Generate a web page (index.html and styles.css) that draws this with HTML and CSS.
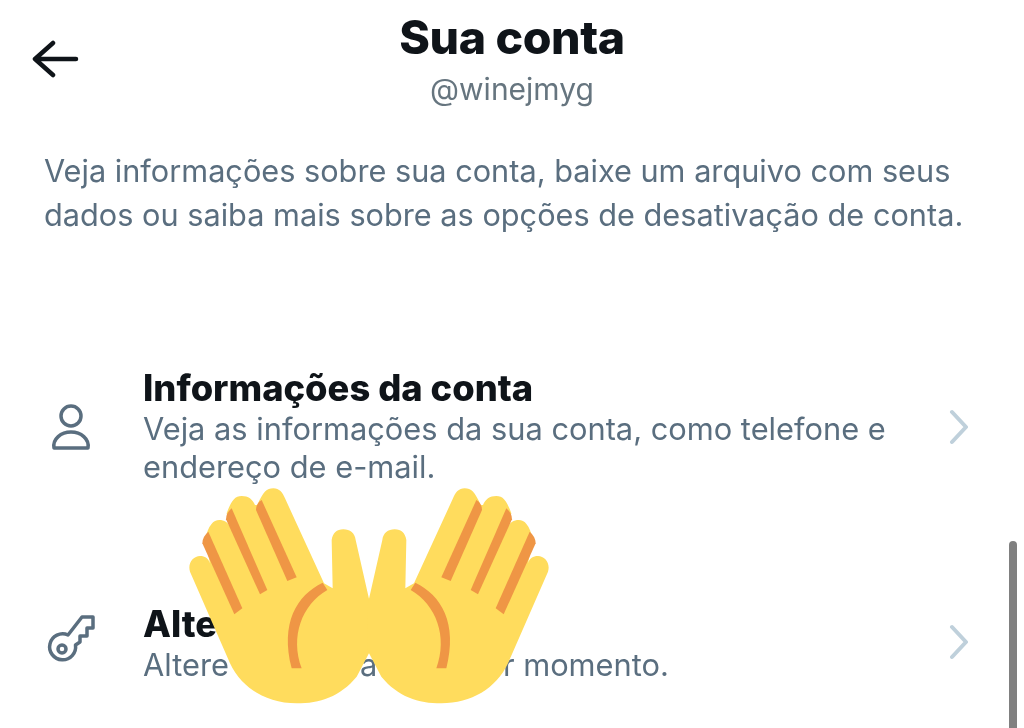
FILE: index.html
```html
<!DOCTYPE html>
<html lang="pt-BR">
<head>
<meta charset="utf-8">
<title>Sua conta</title>
<link rel="stylesheet" href="styles.css">
</head>
<body>
<main class="page">
  <header class="header">
    <svg class="back" viewBox="0 0 48 40" aria-hidden="true"><path d="M21 4 3 20l18 16M3 20h41"/></svg>
    <h1 class="title">Sua conta</h1>
    <p class="handle">@winejmyg</p>
  </header>
  <p class="intro">Veja informações sobre sua conta, baixe um arquivo com seus dados ou saiba mais sobre as opções de desativação de conta.</p>
  <section class="list">
    <article class="row row-first">
      <svg class="icon" viewBox="0 0 48 48" aria-hidden="true"><circle cx="24" cy="13" r="10"/><path d="M7 45c-1.500-9 7-16 17-16s18.500 7 17 16z"/></svg>
      <div class="text">
        <h2 class="row-title">Informações da conta</h2>
        <p class="row-sub">Veja as informações da sua conta, como telefone e endereço de e-mail.</p>
      </div>
      <svg class="chevron" viewBox="0 0 22 36" aria-hidden="true"><path d="M4 3l14 15L4 33"/></svg>
    </article>
    <article class="row row-second">
      <svg class="icon" viewBox="0 0 48 48" aria-hidden="true"><path d="M35 -1H46V10H40V18H33V24L28.500 27A13 13 0 1 1 21 17z"/><circle cx="15" cy="31" r="4"/></svg>
      <div class="text text-low">
        <h2 class="row-title">Alterar senha</h2>
        <p class="row-sub">Altere a senha a qualquer momento.</p>
      </div>
      <svg class="chevron" viewBox="0 0 22 36" aria-hidden="true"><path d="M4 3l14 15L4 33"/></svg>
    </article>
  </section>
</main>
<div class="scrollbar"></div>
<svg class="hands" viewBox="0 0 1140 690" aria-hidden="true">
  <defs>
    <g id="hand">
      <path class="skin" d="M30 275C22 250 40 228 60 228C75 228 85 235 90 250L75 180C85 135 100 120 118 120C132 120 145 128 150 140L140 100C155 60 165 48 185 48C205 48 218 58 225 75L232 75C250 35 260 25 280 25C298 25 308 38 315 55L432 310L458 325L455 180C458 160 470 148 490 148C510 148 525 160 527 180L570 370L572 510L530 590C480 650 420 670 350 670C260 670 185 625 150 550Z"/>
      <path class="tan" d="M245 60Q228 70 228 90L322 303L350 292Z"/>
      <path class="tan" d="M155 85Q138 100 138 118L240 343L262 330Z"/>
      <path class="tan" d="M85 155Q67 170 67 190L163 403L187 385Z"/>
      <path class="tan" d="M428 308C350 345 300 430 335 565H365C330 470 365 375 442 330Z"/>
    </g>
  </defs>
  <use href="#hand"/>
  <use href="#hand" transform="matrix(-1 0 0 1 1134 0)"/>
</svg>
</body>
</html>
```

FILE: styles.css
```css
* { box-sizing: border-box; }
html, body { margin: 0; height: 728px; overflow: hidden; background: #fff; }
body { position: relative; font-family: Inter, "Liberation Sans", sans-serif; }
h1, h2, p { margin: 0; }

.page { display: flex; flex-direction: column; height: 728px; padding: 13px 0 0 44px; filter: blur(0.4px); }

.header { position: relative; display: flex; flex-direction: column; align-items: center; padding-right: 44px; }
.back { position: absolute; left: -12px; top: 26px; width: 48px; height: 40px; fill: none; stroke: #0f1419; stroke-width: 4.500; stroke-linecap: round; stroke-linejoin: round; }
.title { font-size: 46.500px; line-height: 48px; font-weight: 800; color: #0f1419; letter-spacing: -0.4px; }
.handle { margin-top: 9px; font-size: 30px; line-height: 38px; color: #66757f; }

.intro { margin-top: 41px; width: 930px; font-size: 30.700px; line-height: 44px; color: #5a6e7f; }

.list { display: flex; flex-direction: column; margin-top: 125px; }
.row { display: flex; align-items: center; padding-right: 54px; }
.row-first { height: 130px; margin-bottom: 1px; }
.row-second { margin-top: 99px; height: 100px; }
.icon { flex: none; width: 48px; height: 48px; margin-left: 3px; fill: none; stroke: #5a6e7f; stroke-width: 3.500; stroke-linejoin: round; overflow: visible; }
.text { flex: 1; margin-left: 48px; }
.text-low { padding-top: 4px; }
.row-title { font-size: 36.300px; line-height: 38px; font-weight: 800; color: #0f1419; }
.row-sub { margin-top: 3px; font-size: 30.800px; line-height: 38px; color: #5a6e7f; width: 770px; }
.chevron { flex: none; width: 22px; height: 36px; fill: none; stroke: #bfd0db; stroke-width: 4; stroke-linecap: round; stroke-linejoin: round; }

.scrollbar { position: absolute; left: 1009px; top: 541px; width: 8px; height: 187px; border-radius: 4px 4px 0 0; background: #808080; }

.hands { position: absolute; left: 180px; top: 480px; width: 380px; height: 230px; filter: blur(0.4px); }
.skin { fill: #ffdc5d; }
.tan { fill: #ef9645; }
```
